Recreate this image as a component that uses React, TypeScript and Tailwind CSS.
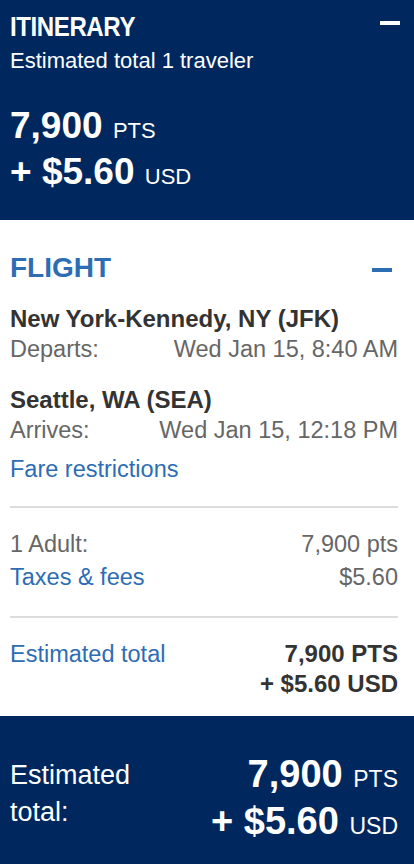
import React from "react";

const navy = "bg-[#00285e]";

const Minus = ({ className }: { className: string }) => (
  <span className={`block w-[20px] h-[4px] ${className}`} />
);

const App = () => {
  return (
    <div className="w-[414px] min-h-[864px] bg-white font-['Liberation_Sans',Arial,sans-serif] overflow-hidden">
      {/* itinerary header */}
      <div className={`${navy} text-white pl-[10px] pr-[14px] pt-[11px] pb-[25px]`}>
        <div className="flex items-start justify-between">
          <h1 className="font-bold text-[28px] leading-[32px] tracking-[-0.5px] scale-x-[0.86] origin-left">
            ITINERARY
          </h1>
          <Minus className="bg-white mt-[10px]" />
        </div>
        <p className="text-[22px] leading-[28px] mt-[4px]">Estimated total 1 traveler</p>
        <div className="mt-[28px] text-[37px] leading-[46px] font-bold">
          <div>
            7,900 <span className="text-[22px] leading-none font-normal">PTS</span>
          </div>
          <div>
            + $5.60 <span className="text-[22px] leading-none font-normal">USD</span>
          </div>
        </div>
      </div>

      {/* flight */}
      <div className="pl-[10px] pr-[16px] pt-[32px]">
        <div className="flex items-center justify-between">
          <h2 className="text-[28px] leading-[32px] font-bold text-[#2d6db4]">FLIGHT</h2>
          <Minus className="bg-[#2d6db4] mr-[6px] mt-[3px]" />
        </div>

        <div className="text-[23.5px] leading-[30px]">
          <div className="mt-[20px]">
            <div className="font-bold text-[24px] text-[#333]">New York-Kennedy, NY (JFK)</div>
            <div className="flex justify-between text-[#666]">
              <span>Departs:</span>
              <span>Wed Jan 15, 8:40 AM</span>
            </div>
          </div>
          <div className="mt-[21px]">
            <div className="font-bold text-[24px] text-[#333]">Seattle, WA (SEA)</div>
            <div className="flex justify-between text-[#666]">
              <span>Arrives:</span>
              <span>Wed Jan 15, 12:18 PM</span>
            </div>
          </div>
          <div className="mt-[9px] text-[#2d6db4]">Fare restrictions</div>

          <div className="mt-[22px] h-[2px] bg-[#dcdcdc]" />

          <div className="mt-[21px] flex flex-col gap-[3px]">
            <div className="flex justify-between text-[#666]">
              <span>1 Adult:</span>
              <span>7,900 pts</span>
            </div>
            <div className="flex justify-between">
              <span className="text-[#2d6db4]">Taxes &amp; fees</span>
              <span className="text-[#666]">$5.60</span>
            </div>
          </div>

          <div className="mt-[24px] h-[2px] bg-[#dcdcdc]" />

          <div className="mt-[21px] mb-[17px] flex justify-between">
            <span className="text-[#2d6db4]">Estimated total</span>
            <div className="text-right font-bold text-[24px] text-[#333]">
              <div>7,900 PTS</div>
              <div>+ $5.60 USD</div>
            </div>
          </div>
        </div>
      </div>

      {/* total footer */}
      <div className={`${navy} text-white pl-[10px] pr-[16px] pt-[35px] pb-[19px] flex justify-between items-start`}>
        <div className="mt-[6px] text-[27px] leading-[37px]">
          <div>Estimated</div>
          <div>total:</div>
        </div>
        <div className="text-right text-[38px] leading-[47px] font-bold">
          <div>
            7,900 <span className="text-[23px] leading-none font-normal">PTS</span>
          </div>
          <div>
            + $5.60 <span className="text-[23px] leading-none font-normal">USD</span>
          </div>
        </div>
      </div>
    </div>
  );
};

export default App;
